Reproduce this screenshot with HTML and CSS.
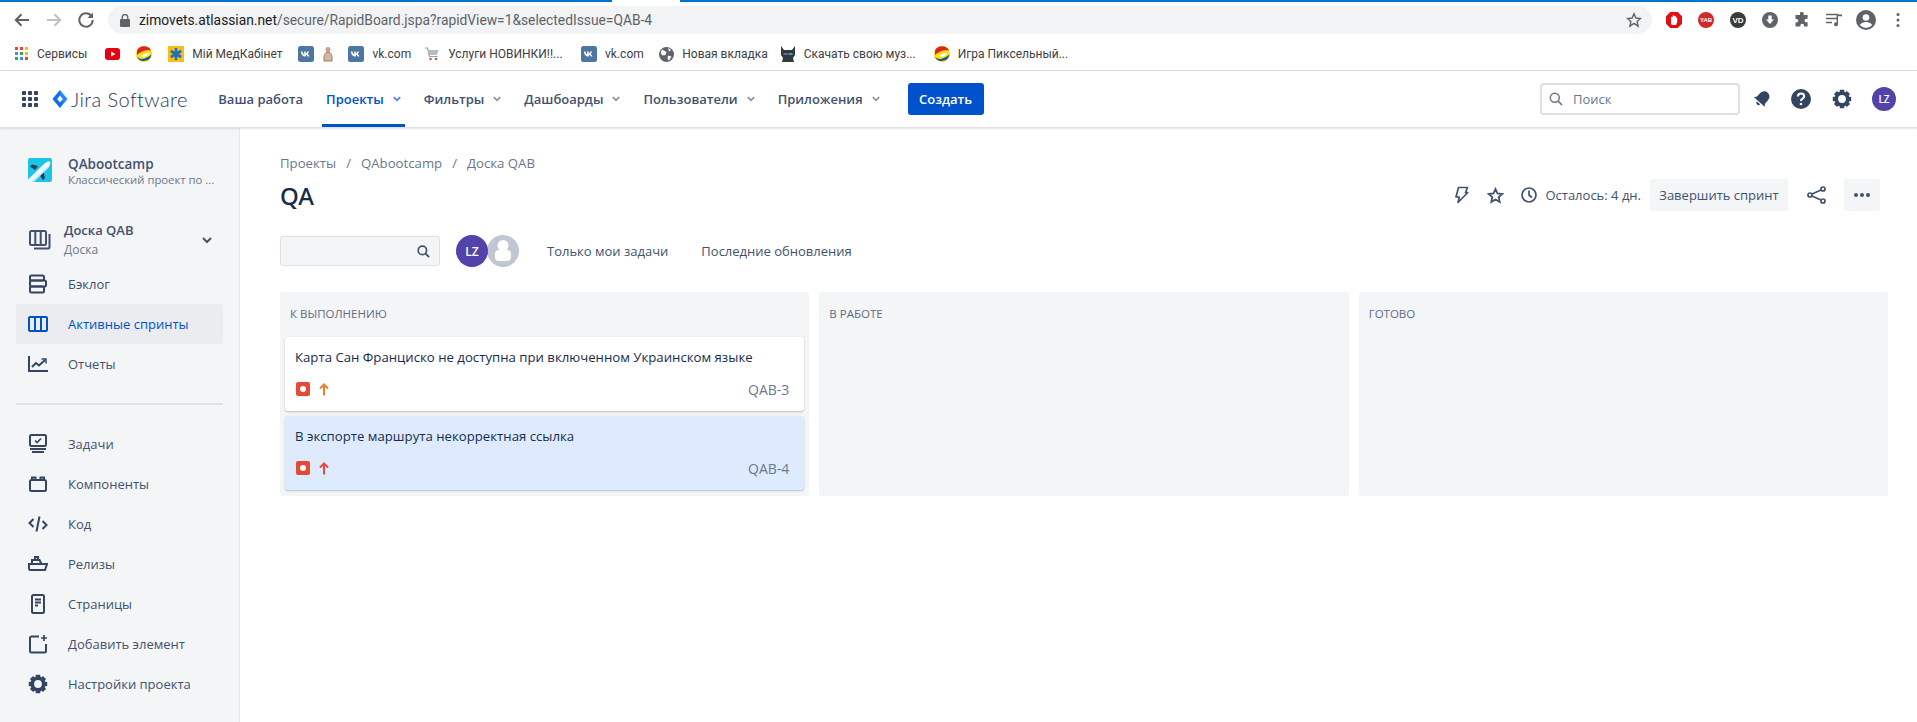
FILE: index.html
```html
<!DOCTYPE html>
<html lang="ru">
<head>
<meta charset="utf-8">
<title>Доска QAB</title>
<link rel="stylesheet" href="styles.css">
</head>
<body>

<header class="browser">
	<div class="loadbar"><span class="load-a"></span><span class="load-b"></span></div>
	<div class="toolbar">
		<span class="tool"><svg width="18" height="18" viewBox="0 0 18 18"><path d="M16 9H3M8.5 3.2 2.8 9l5.7 5.8" fill="none" stroke="#5f6368" stroke-width="2"/></svg></span>
		<span class="tool"><svg width="18" height="18" viewBox="0 0 18 18"><path d="M2 9h13M9.5 3.2 15.2 9l-5.7 5.8" fill="none" stroke="#bdc1c6" stroke-width="2"/></svg></span>
		<span class="tool"><svg width="18" height="18" viewBox="0 0 18 18"><path d="M14.5 5.2A6.7 6.7 0 1 0 15.7 9" fill="none" stroke="#5f6368" stroke-width="2"/><path d="M16 1.5v5.6h-5.6z" fill="#5f6368"/></svg></span>
		<div class="address">
			<svg class="lock" width="10" height="13" viewBox="0 0 10 13"><path d="M2.2 5V3.4a2.8 2.8 0 0 1 5.6 0V5" fill="none" stroke="#5f6368" stroke-width="1.3"/><rect y="5" width="10" height="8" rx="1" fill="#5f6368"/></svg>
			<span class="url"><b>zimovets.atlassian.net</b>/secure/RapidBoard.jspa?rapidView=1&amp;selectedIssue=QAB-4</span>
			<svg class="addr-star" width="16" height="16" viewBox="0 0 16 16"><path d="m8 1.800 1.900 4.200 4.600.5-3.400 3.100 1 4.500L8 11.300l-4.100 2.800 1-4.500-3.400-3.100 4.600-.5z" fill="none" stroke="#5f6368" stroke-width="1.400"/></svg>
		</div>
		<div class="extensions">
			<span class="tool"><svg width="18" height="18" viewBox="0 0 18 18"><path d="M5.300 1h7.400L17 5.300v7.400L12.700 17H5.300L1 12.700V5.300z" fill="#e10f0f"/><path d="M6 13V6.500a.8.8 0 0 1 1.600 0V5a.8.8 0 0 1 1.600 0v.5a.8.8 0 0 1 1.600 0V7a.8.8 0 0 1 1.400-.2V11l-1.200 3H7.500z" fill="#fff"/></svg></span>
			<span class="tool"><svg width="18" height="18" viewBox="0 0 18 18"><circle cx="9" cy="9" r="8" fill="#cf2a27"/><text x="9" y="11.300" class="ext-text">YAB</text></svg></span>
			<span class="tool"><svg width="18" height="18" viewBox="0 0 18 18"><circle cx="9" cy="9" r="8" fill="#3a3a3a"/><text x="9" y="11.800" class="ext-text-lg">VD</text></svg></span>
			<span class="tool"><svg width="18" height="18" viewBox="0 0 18 18"><circle cx="9" cy="9" r="8" fill="#5f6368"/><path d="M7.300 4.500h3.400v4H13L9 13 5 8.500h2.300z" fill="#fff"/></svg></span>
			<span class="tool"><svg width="16" height="16" viewBox="0 0 16 16"><path d="M6 1.500a1.800 1.800 0 0 1 3.600 0V3h4v3.700h-1.300a1.800 1.800 0 0 0 0 3.600h1.300V14.500H10v-1a1.800 1.800 0 0 0-3.600 0v1H1.500v-4h1a1.800 1.800 0 0 0 0-3.600h-1V3H6z" fill="#5f6368"/></svg></span>
			<span class="tool"><svg width="18" height="16" viewBox="0 0 18 16"><path d="M1 2.500h12M1 6.500h12M1 10.500h6" stroke="#5f6368" stroke-width="1.500"/><path d="M13 4v8.300a2 2 0 1 1-1.400-1.900V2.500H17v1.800h-4z" fill="#5f6368"/></svg></span>
			<span class="tool"><svg width="20" height="20" viewBox="0 0 20 20"><circle cx="10" cy="10" r="10" fill="#5f6368"/><circle cx="10" cy="7.500" r="3.300" fill="#fff"/><path d="M3.800 15c1.500-2.300 4-3 6.200-3s4.700.7 6.200 3a8 8 0 0 1-12.400 0z" fill="#fff"/></svg></span>
			<span class="tool"><svg width="4" height="16" viewBox="0 0 4 16"><circle cx="2" cy="2.500" r="1.500" fill="#5f6368"/><circle cx="2" cy="8" r="1.500" fill="#5f6368"/><circle cx="2" cy="13.500" r="1.500" fill="#5f6368"/></svg></span>
		</div>
	</div>
	<nav class="bookmarks">
		<a class="bm bm-apps"><svg width="14" height="14" viewBox="0 0 14 14"><g><rect width="3" height="3" fill="#ea4335"/><rect x="5" width="3" height="3" fill="#ea4335"/><rect x="10" width="3" height="3" fill="#fbbc04"/><rect y="5" width="3" height="3" fill="#4285f4"/><rect x="5" y="5" width="3" height="3" fill="#34a853"/><rect x="10" y="5" width="3" height="3" fill="#fbbc04"/><rect y="10" width="3" height="3" fill="#34a853"/><rect x="5" y="10" width="3" height="3" fill="#4285f4"/><rect x="10" y="10" width="3" height="3" fill="#ea4335"/></g></svg>Сервисы</a>
		<a class="bm bm-yt"><svg width="16" height="14" viewBox="0 0 16 14"><rect y="1" width="15" height="12" rx="3" fill="#e60012"/><path d="m6 4.500 4.500 2.500L6 9.500z" fill="#fff"/></svg></a>
		<a class="bm bm-ball"><svg width="16" height="16" viewBox="0 0 16 16"><use href="#ball"/></svg></a>
		<a class="bm bm-med"><svg width="16" height="16" viewBox="0 0 16 16"><rect width="16" height="16" fill="#f5bd19"/><path d="M8 2v12M2.800 5l10.400 6M13.200 5 2.800 11" stroke="#1f6fb8" stroke-width="2.600"/></svg>Мій МедКабінет</a>
		<a class="bm bm-vk"><svg width="16" height="16" viewBox="0 0 16 16"><use href="#vk"/></svg></a>
		<a class="bm bm-person"><svg width="12" height="16" viewBox="0 0 12 16"><circle cx="6" cy="3.500" r="2.500" fill="#c9a48c"/><path d="M2 15c-.6-5 .8-9 4-9s4.600 4 4 9z" fill="#d8b59e" stroke="#6b5a50" stroke-width=".7"/></svg></a>
		<a class="bm bm-vk2"><svg width="16" height="16" viewBox="0 0 16 16"><use href="#vk"/></svg>vk.com</a>
		<a class="bm bm-cart"><svg width="16" height="16" viewBox="0 0 16 16"><path d="M1 2h2.500l2 8.500h8" fill="none" stroke="#9aa0a6" stroke-width="1.200"/><path d="M4 4h10.500l-1.500 5H5.300z" fill="#b8bcc0"/><circle cx="6.500" cy="13" r="1.300" fill="#c0623a"/><circle cx="12" cy="13" r="1.300" fill="#c0623a"/></svg>Услуги НОВИНКИ!!...</a>
		<a class="bm bm-vk3"><svg width="16" height="16" viewBox="0 0 16 16"><use href="#vk"/></svg>vk.com</a>
		<a class="bm bm-globe"><svg width="15" height="15" viewBox="0 0 15 15"><circle cx="7.500" cy="7.500" r="7.500" fill="#5f6368"/><path d="M3 2.500 7.500 5 6.500 8l-3 .5L1.500 6zM9 8.500l3.500 1-2.500 4-1.500-1.500zM9 1l3 2-2 1.500z" fill="#fff"/></svg>Новая вкладка</a>
		<a class="bm bm-cat"><svg width="16" height="16" viewBox="0 0 16 16"><path d="M1 0l3 4h8l3-4v9l-2 3 1 4H2l1-4-2-3z" fill="#2f3a3f"/><path d="M3.500 7h4v2h-4z" fill="#7c5cb0"/><path d="M8.500 7h4v2h-4z" fill="#3aa6a0"/></svg>Скачать свою муз...</a>
		<a class="bm bm-game"><svg width="16" height="16" viewBox="0 0 16 16"><use href="#ball"/></svg>Игра Пиксельный...</a>
	</nav>
</header>

<svg class="defs" width="0" height="0">
	<symbol id="ball" viewBox="0 0 16 16">
		<circle cx="8" cy="8" r="8" fill="#f7e017"/>
		<path d="M1 4.500A8 8 0 0 1 15 4.500C11 3.500 5 4.500 1 9z" fill="#e3221c"/>
		<path d="M.5 10.500c3 4 9 3 15-2A8 8 0 0 1 .5 10.500z" fill="#1b4fa8"/>
		<path d="M5 10c2-2 5-3 8-3-1 3-5 5-8 3z" fill="#fff"/>
	</symbol>
	<symbol id="vk" viewBox="0 0 16 16">
		<rect width="16" height="16" rx="2.500" fill="#4d76a1"/>
		<path d="M2.800 5.500h1.700c.4 1.700 1.100 2.800 1.700 3V5.500h1.500v1.900c.7-.1 1.300-1 1.600-1.900H11c-.2 1.100-1 2-1.500 2.400.6.300 1.500 1.100 1.900 2.600H9.700c-.3-.9-1-1.600-1.800-1.700v1.700h-.5c-2.600 0-4.200-1.800-4.600-5z" fill="#fff"/>
	</symbol>
	<symbol id="cog" viewBox="0 0 20 20">
		<circle cx="10" cy="10" r="5.700" fill="none" stroke="#344563" stroke-width="3.600"/>
		<g fill="#344563">
			<rect x="7.700" y=".8" width="4.600" height="4" rx=".8"/>
			<rect x="7.700" y=".8" width="4.600" height="4" rx=".8" transform="rotate(45 10 10)"/>
			<rect x="7.700" y=".8" width="4.600" height="4" rx=".8" transform="rotate(90 10 10)"/>
			<rect x="7.700" y=".8" width="4.600" height="4" rx=".8" transform="rotate(135 10 10)"/>
			<rect x="7.700" y=".8" width="4.600" height="4" rx=".8" transform="rotate(180 10 10)"/>
			<rect x="7.700" y=".8" width="4.600" height="4" rx=".8" transform="rotate(225 10 10)"/>
			<rect x="7.700" y=".8" width="4.600" height="4" rx=".8" transform="rotate(270 10 10)"/>
			<rect x="7.700" y=".8" width="4.600" height="4" rx=".8" transform="rotate(315 10 10)"/>
		</g>
	</symbol>
</svg>

<div class="jira-nav">
	<svg class="apps" width="16" height="16" viewBox="0 0 16 16" fill="#344563"><rect width="4" height="4" rx=".8"/><rect x="6" width="4" height="4" rx=".8"/><rect x="12" width="4" height="4" rx=".8"/><rect y="6" width="4" height="4" rx=".8"/><rect x="6" y="6" width="4" height="4" rx=".8"/><rect x="12" y="6" width="4" height="4" rx=".8"/><rect y="12" width="4" height="4" rx=".8"/><rect x="6" y="12" width="4" height="4" rx=".8"/><rect x="12" y="12" width="4" height="4" rx=".8"/></svg>
	<svg class="diamond" width="16" height="20" viewBox="0 0 16 20"><path d="M8 1 15.500 10 8 19 .5 10z" fill="#2684ff"/><path d="M8 1 .5 10 8 19l2.800-5.500L8 10z" fill="#0052cc" opacity=".45"/><path d="M8 6.500 10.800 10 8 13.500 5.200 10z" fill="#fff"/></svg>
	<span class="logo-text">Jira Software</span>
	<a class="nav-item first">Ваша работа</a>
	<a class="nav-item active">Проекты <svg class="chev" width="8" height="6" viewBox="0 0 8 6"><path d="M.8 1.200 4 4.400l3.200-3.200" fill="none" stroke="#0052cc" stroke-width="1.700" opacity=".7"/></svg></a>
	<a class="nav-item">Фильтры <svg class="chev" width="8" height="6" viewBox="0 0 8 6"><path d="M.8 1.200 4 4.400l3.200-3.200" fill="none" stroke="#8993a4" stroke-width="1.700"/></svg></a>
	<a class="nav-item">Дашбоарды <svg class="chev" width="8" height="6" viewBox="0 0 8 6"><path d="M.8 1.200 4 4.400l3.200-3.200" fill="none" stroke="#8993a4" stroke-width="1.700"/></svg></a>
	<a class="nav-item">Пользователи <svg class="chev" width="8" height="6" viewBox="0 0 8 6"><path d="M.8 1.200 4 4.400l3.200-3.200" fill="none" stroke="#8993a4" stroke-width="1.700"/></svg></a>
	<a class="nav-item">Приложения <svg class="chev" width="8" height="6" viewBox="0 0 8 6"><path d="M.8 1.200 4 4.400l3.200-3.200" fill="none" stroke="#8993a4" stroke-width="1.700"/></svg></a>
	<button class="create">Создать</button>
	<div class="nav-right">
		<div class="search">
			<svg width="14" height="14" viewBox="0 0 14 14"><circle cx="5.800" cy="5.800" r="4.500" fill="none" stroke="#6b778c" stroke-width="1.500"/><path d="m9 9 4 4" stroke="#6b778c" stroke-width="1.700"/></svg>
			<span>Поиск</span>
		</div>
		<svg class="bell" width="20" height="20" viewBox="0 0 20 20"><g transform="rotate(42 10 10)" fill="#344563"><path d="M10 1.500c-3.600 0-5.300 2.800-5.300 6v4L2.800 14h14.400l-1.900-2.500v-4c0-3.200-1.700-6-5.300-6z"/><path d="M7.800 15.200a2.200 2.200 0 0 0 4.400 0z"/></g></svg>
		<svg class="help" width="20" height="20" viewBox="0 0 20 20"><circle cx="10" cy="10" r="10" fill="#344563"/><path d="M6.900 7.500c0-4 6.300-4 6.300-.3 0 2.600-3.200 2.300-3.200 4.800" fill="none" stroke="#fff" stroke-width="2.100"/><circle cx="10" cy="15" r="1.300" fill="#fff"/></svg>
		<svg class="gear" width="20" height="20" viewBox="0 0 20 20"><use href="#cog"/></svg>
		<span class="avatar small">LZ</span>
	</div>
</div>

<div class="layout">
	<aside class="sidebar">
		<div class="project">
			<svg class="project-icon" width="24" height="24" viewBox="0 0 24 24"><rect width="24" height="24" rx="2" fill="#1bc5e6"/><path d="M10 8 4 6.500 2 8.500 7 12zM15.500 13.500l1.500 6.500-2 2-3.500-5z" fill="#253858"/><path d="M0 21.500 15.500 6.500C18 4 20.500 2.800 22 3.800c1 1.500 0 4-2.500 6.500L5 24H2.500L0 24z" fill="#eefafd"/><path d="M3 24 20 8.500l.8 1L6 24z" fill="#bfe6f1"/></svg>
			<div class="project-text">
				<div class="project-name">QAbootcamp</div>
				<div class="project-sub">Классический проект по ...</div>
			</div>
		</div>
		<div class="board-switch">
			<svg width="22" height="20" viewBox="0 0 22 20" fill="none" stroke="#42526e" stroke-width="2"><rect x="1" y="1" width="16" height="14" rx="1.500"/><path d="M6.300 1v14M11.700 1v14M20.500 4v13a1.500 1.500 0 0 1-1.500 1.500H5"/></svg>
			<div class="board-text">
				<div class="board-name">Доска QAB</div>
				<div class="board-sub">Доска</div>
			</div>
			<svg class="board-chev" width="10" height="7" viewBox="0 0 10 7"><path d="m1 1 4 4 4-4" fill="none" stroke="#42526e" stroke-width="2"/></svg>
		</div>
		<a class="side-item">
			<svg width="20" height="20" viewBox="0 0 20 20" fill="none" stroke="#344563" stroke-width="2"><rect x="2" y="1.500" width="14" height="5" rx="1.500"/><rect x="2" y="6.500" width="16" height="6" rx="1.500"/><rect x="2" y="12.500" width="14" height="6" rx="1.500"/></svg>
			Бэклог
		</a>
		<a class="side-item active">
			<svg width="20" height="18" viewBox="0 0 20 18" fill="none" stroke="#0052cc" stroke-width="2"><rect x="1" y="2" width="18" height="14" rx="1"/><path d="M7 2v14M13 2v14"/></svg>
			Активные спринты
		</a>
		<a class="side-item">
			<svg width="20" height="18" viewBox="0 0 20 18" fill="none" stroke="#344563" stroke-width="2"><path d="M1 1v15h19"/><path d="m4 12 4-4 3 2.500L17 5"/><path d="M13.500 4H18v4.500" stroke-width="1.500"/></svg>
			Отчеты
		</a>
		<hr class="side-rule">
		<a class="side-item">
			<svg width="20" height="20" viewBox="0 0 20 20" fill="none" stroke="#344563" stroke-width="2"><rect x="2" y="1" width="16" height="11" rx="1.500"/><path d="m7 6.500 2 2L13 4.500" stroke-width="1.600"/><path d="M2 15h16M4 18h12"/></svg>
			Задачи
		</a>
		<a class="side-item">
			<svg width="20" height="18" viewBox="0 0 20 18" fill="none" stroke="#344563" stroke-width="2"><rect x="2" y="5" width="16" height="11" rx="1.500"/><path d="M4 5V2.500h3.500V5M12.500 5V2.500H16V5"/></svg>
			Компоненты
		</a>
		<a class="side-item">
			<svg width="20" height="18" viewBox="0 0 20 18" fill="none" stroke="#344563" stroke-width="2"><path d="M5.500 4 1.500 8l4 4M14.500 6l4 4-4 4M11.500 1.500l-3 15"/></svg>
			Код
		</a>
		<a class="side-item">
			<svg width="20" height="18" viewBox="0 0 20 18" fill="none" stroke="#344563" stroke-width="2"><path d="M1 9h18l-2 6H2.500a1.500 1.500 0 0 1-1.500-1.500zM4 9V5h7.500l2 4M7 5V2h3v3"/></svg>
			Релизы
		</a>
		<a class="side-item">
			<svg width="20" height="20" viewBox="0 0 20 20" fill="none" stroke="#344563" stroke-width="2"><rect x="4" y="1" width="12" height="18" rx="1.500"/><path d="M7 5.500h6M7 8.500h6M7 11.500h3"/></svg>
			Страницы
		</a>
		<a class="side-item">
			<svg width="20" height="20" viewBox="0 0 20 20" fill="none" stroke="#344563" stroke-width="2"><path d="M11 2.500H3.500A1.500 1.500 0 0 0 2 4v13a1.500 1.500 0 0 0 1.500 1.500h13A1.500 1.500 0 0 0 18 17V10"/><path d="M16 1v6M13 4h6" stroke-width="1.700"/></svg>
			Добавить элемент
		</a>
		<a class="side-item">
			<svg width="20" height="20" viewBox="0 0 20 20"><use href="#cog"/></svg>
			Настройки проекта
		</a>
	</aside>

	<main class="content">
		<div class="crumbs"><a>Проекты</a><i>/</i><a>QAbootcamp</a><i>/</i><a>Доска QAB</a></div>
		<div class="title-row">
			<h1>QA</h1>
			<div class="title-actions">
				<svg class="act-bolt" width="15" height="18" viewBox="0 0 15 18" fill="none" stroke="#42526e" stroke-width="1.700" stroke-linejoin="round"><path d="M4.500 1.500h9l-2 5h2.300L4 16.500l1.300-5.500H2z"/></svg>
				<svg class="act-star" width="17" height="17" viewBox="0 0 17 17"><path d="m8.500 2 2 4.500 4.800.5-3.600 3.200 1 4.800-4.200-2.500L4.300 15l1-4.800L1.700 7l4.800-.5z" fill="none" stroke="#42526e" stroke-width="1.800"/></svg>
				<svg class="act-clock" width="16" height="16" viewBox="0 0 16 16" fill="none" stroke="#42526e" stroke-width="1.700"><circle cx="8" cy="8" r="7"/><path d="M8 3.500V8l3 2.500"/></svg>
				<span class="remaining">Осталось: 4 дн.</span>
				<button class="btn-sub finish">Завершить спринт</button>
				<svg class="act-share" width="19" height="18" viewBox="0 0 19 18" fill="none" stroke="#42526e" stroke-width="1.700"><circle cx="3" cy="9" r="2"/><circle cx="16" cy="3" r="2"/><circle cx="16" cy="15" r="2"/><path d="m5 8 9-4M5 10l9 4"/></svg>
				<button class="btn-sub more"><svg width="16" height="4" viewBox="0 0 16 4" fill="#42526e"><circle cx="2" cy="2" r="2"/><circle cx="8" cy="2" r="2"/><circle cx="14" cy="2" r="2"/></svg></button>
			</div>
		</div>
		<div class="filters">
			<div class="filter-input"><svg width="13" height="13" viewBox="0 0 14 14"><circle cx="5.800" cy="5.800" r="4.500" fill="none" stroke="#42526e" stroke-width="1.800"/><path d="m9 9 4 4" stroke="#42526e" stroke-width="2"/></svg></div>
			<div class="people">
				<span class="avatar big">LZ</span>
				<span class="avatar ghost"><svg width="32" height="32" viewBox="0 0 32 32"><circle cx="16" cy="16" r="16" fill="#c1c7d0"/><circle cx="16" cy="10.500" r="5.500" fill="#fff"/><rect x="8" y="15" width="16" height="11" rx="4" fill="#fff"/></svg></span>
			</div>
			<a class="quick first-q">Только мои задачи</a>
			<a class="quick">Последние обновления</a>
		</div>
		<div class="board">
			<section class="column">
				<h2>К выполнению</h2>
				<article class="card">
					<p>Карта Сан Франциско не доступна при включенном Украинском языке</p>
					<div class="card-foot">
						<svg width="14" height="14" viewBox="0 0 14 14"><rect width="14" height="14" rx="2" fill="#e5493a"/><circle cx="7" cy="7" r="3" fill="#fff"/></svg>
						<svg width="10" height="13" viewBox="0 0 10 13"><path d="M5 12.500V2M1 5.500 5 1.500l4 4" fill="none" stroke="#e97f33" stroke-width="2"/></svg>
						<span class="key">QAB-3</span>
					</div>
				</article>
				<article class="card selected">
					<p>В экспорте маршрута некорректная ссылка</p>
					<div class="card-foot">
						<svg width="14" height="14" viewBox="0 0 14 14"><rect width="14" height="14" rx="2" fill="#e5493a"/><circle cx="7" cy="7" r="3" fill="#fff"/></svg>
						<svg width="10" height="13" viewBox="0 0 10 13"><path d="M5 12.500V2M1 5.500 5 1.500l4 4" fill="none" stroke="#e5493a" stroke-width="2"/></svg>
						<span class="key">QAB-4</span>
					</div>
				</article>
			</section>
			<section class="column"><h2>В работе</h2></section>
			<section class="column"><h2>Готово</h2></section>
		</div>
	</main>
</div>

</body>
</html>
```

FILE: styles.css
```css
* { box-sizing:border-box; }
html, body { margin:0; height:100%; overflow:hidden; }
body { font-family:"Open Sans", "Noto Sans", sans-serif; font-size:13px; color:#172b4d; background:#fff; width:1917px; height:722px; }
a { color:inherit; text-decoration:none; }
svg { display:block; flex:none; }
.defs { position:absolute; }
button { font:inherit; border:0; }

/* browser chrome */
.browser { height:71px; border-bottom:1px solid #dadce0; font-family:"Roboto", sans-serif; }
.loadbar { height:2px; display:flex; gap:68px; }
.load-a { width:612px; background:#0073cf; }
.load-b { flex:1; background:#0073cf; }
.toolbar { height:36px; display:flex; align-items:center; padding-left:6px; }
.tool { width:32px; height:28px; display:flex; align-items:center; justify-content:center; }
.address { width:1544px; height:28px; margin-left:6px; background:#f1f3f4; border-radius:14px; display:flex; align-items:center; padding-left:12px; }
.url { margin-left:9px; font-size:13.8px; color:#5f6368; }
.url b { font-weight:400; color:#202124; }
.addr-star { margin-left:auto; margin-right:10px; }
.extensions { display:flex; margin-left:6px; }
.ext-text { font:bold 6px "Liberation Sans", sans-serif; fill:#fff; text-anchor:middle; }
.ext-text-lg { font:bold 8px "Liberation Sans", sans-serif; fill:#fff; text-anchor:middle; }
.bookmarks { height:32px; display:flex; align-items:center; padding-left:15px; font-size:12px; color:#3c4043; }
.bm { display:flex; align-items:center; gap:8px; }
.bm-yt { margin-left:18px; }
.bm-ball { margin-left:15px; }
.bm-med { margin-left:16px; }
.bm-vk { margin-left:16px; }
.bm-person { margin-left:8px; }
.bm-vk2 { margin-left:14px; }
.bm-cart { margin-left:13px; }
.bm-vk3 { margin-left:18.5px; }
.bm-globe { margin-left:15.5px; }
.bm-cat { margin-left:12px; }
.bm-game { margin-left:18px; }

/* jira top bar */
.jira-nav { height:57px; display:flex; align-items:center; padding-left:22px; border-bottom:1px solid #dfe1e6; box-shadow:0 1px 2px rgba(9,30,66,.12); position:relative; z-index:1; background:#fff; font-size:13px; color:#42526e; }
.diamond { margin-left:14px; }
.logo-text { margin-left:3px; font:300 20px "Lato", sans-serif; color:#253858; letter-spacing:.4px; }
.nav-item { height:56px; padding:0 4px; margin-left:15px; display:flex; align-items:center; gap:9px; font-weight:600; color:#42526e; border-bottom:3px solid transparent; border-top:3px solid transparent; }
.nav-item.first { margin-left:26.5px; }
.nav-item.active { color:#0052cc; border-bottom-color:#0052cc; }
.create { margin-left:24px; width:76px; height:32px; border-radius:3px; background:#0052cc; color:#fff; font-weight:600; }
.nav-right { margin-left:auto; display:flex; align-items:center; padding-right:21px; }
.search { width:200px; height:32px; border:2px solid #dfe1e6; border-radius:4px; display:flex; align-items:center; gap:10px; padding-left:7px; color:#6b778c; }
.bell { margin-left:12px; }
.help { margin-left:19px; }
.gear { margin-left:21px; }
.avatar { display:flex; align-items:center; justify-content:center; border-radius:50%; background:#5243aa; color:#fff; font-weight:600; }
.avatar.small { width:24px; height:24px; font-size:10px; margin-left:20px; }

/* sidebar */
.layout { display:flex; height:594px; }
.sidebar { width:240px; flex:none; background:#f4f5f7; border-right:1px solid #e4e6ea; padding:30px 16px 0; color:#42526e; }
.project { display:flex; align-items:center; height:24px; padding-left:12px; gap:16px; }
.project-text { padding-top:3px; }
.project-name { font-size:13.5px; font-weight:600; color:#42526e; line-height:16px; }
.project-sub { font-size:11.3px; color:#6b778c; line-height:16px; }
.board-switch { display:flex; align-items:center; margin-top:38px; height:40px; padding-left:13px; gap:13px; }
.board-name { font-size:13px; font-weight:600; color:#42526e; line-height:19px; }
.board-sub { font-size:12px; color:#6b778c; line-height:19px; }
.board-chev { margin-left:auto; margin-right:11px; }
.side-item { height:40px; display:flex; align-items:center; padding-left:12px; gap:20px; border-radius:3px; color:#42526e; }
.board-switch + .side-item { margin-top:4px; }
.side-item.active { background:#ebecf0; color:#0052cc; }
.side-rule { height:2px; margin:19px 0; border:0; background:#dfe1e6; }

/* main */
.content { flex:1; padding:26px 29px 0 40px; }
.crumbs { display:flex; gap:10px; height:18px; line-height:18px; color:#6b778c; font-size:13.2px; }
.crumbs i { font-style:normal; }
.title-row { display:flex; align-items:center; height:36px; margin-top:5px; }
h1 { margin:0; font-family:"Noto Sans", sans-serif; font-size:24px; font-weight:500; color:#172b4d; }
.title-actions { margin-left:auto; padding-right:8px; display:flex; align-items:center; }
.act-star { margin-left:18px; }
.act-clock { margin-left:17px; }
.remaining { margin-left:8px; color:#42526e; }
.btn-sub { background:#f4f5f7; color:#42526e; height:32px; border-radius:3px; }
.finish { width:138px; margin-left:9px; }
.act-share { margin-left:19px; }
.more { width:36px; margin-left:18px; display:flex; align-items:center; justify-content:center; }
.filters { display:flex; align-items:center; height:32px; margin-top:22px; }
.filter-input { width:160px; height:30px; background:#f4f5f7; border:1px solid #dfe1e6; border-radius:3px; display:flex; align-items:center; justify-content:flex-end; padding-right:9px; }
.people { display:flex; margin-left:16px; }
.avatar.big { width:32px; height:32px; font-size:12px; position:relative; z-index:1; }
.avatar.ghost { margin-left:-1px; background:none; }
.quick { color:#42526e; margin-left:33px; }
.first-q { margin-left:28px; }
.board { display:flex; gap:10px; margin-top:25px; }
.column { flex:1; height:204px; background:#f4f5f7; border-radius:3px; padding:0 5px; }
.column h2 { margin:0; height:45px; padding:14px 5px 0; font-size:11.5px; line-height:16px; font-weight:400; text-transform:uppercase; color:#5e6c84; }
.card { height:74px; background:#fff; border-radius:3px; box-shadow:0 1px 2px rgba(9,30,66,.25); padding:11px 15px 0 10px; margin-bottom:5px; }
.card.selected { background:#deebff; }
.card p { margin:0; height:18px; line-height:18px; color:#172b4d; font-size:13.2px; }
.card-foot { display:flex; align-items:center; gap:8.5px; margin-top:14px; height:18px; padding-left:1px; }
.key { margin-left:auto; color:#6b778c; font-size:14px; }
```
